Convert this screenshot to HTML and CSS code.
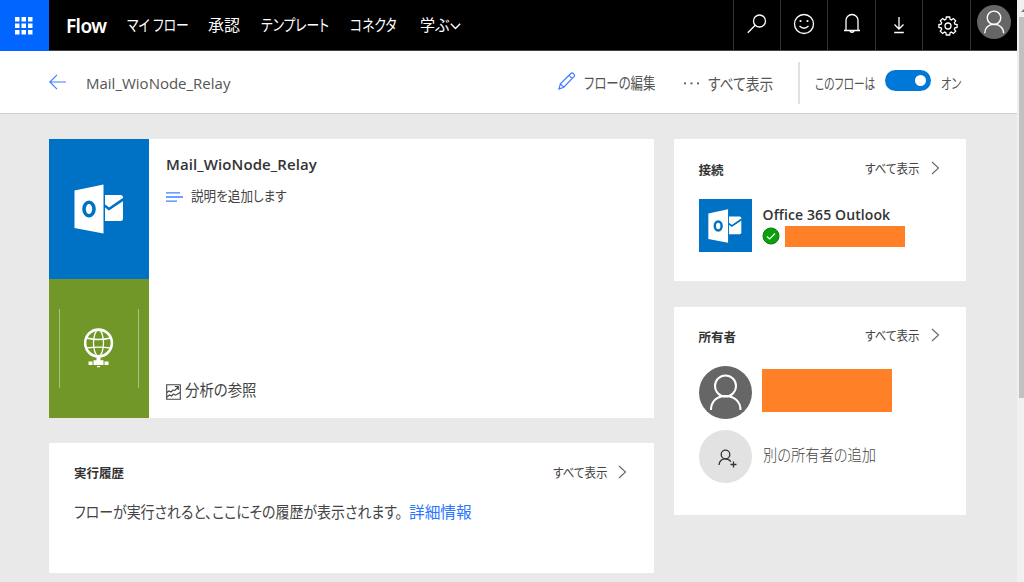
FILE: index.html
```html
<!DOCTYPE html>
<html lang="ja">
<head>
<meta charset="utf-8">
<title>Flow</title>
<link rel="stylesheet" href="styles.css">
</head>
<body>
<svg class="defs" width="0" height="0">
  <symbol id="outlook" viewBox="0 0 50 50">
    <path fill="#fff" d="M.5 6.500 29.500 .5v49L.5 44zM31 11H46.500q2.500 0 2.500 2.500V35q0 2-2.500 2H31z"/>
    <ellipse cx="15" cy="25" rx="5" ry="6.700" fill="none" stroke="#0072c6" stroke-width="3.600"/>
    <path d="M30.500 21.500 35 25 49.500 15.200" fill="none" stroke="#0072c6" stroke-width="2.600"/>
  </symbol>
  <symbol id="person" viewBox="0 0 53 53">
    <circle cx="26.500" cy="20" r="10.500"/>
    <path d="M12 44c0-8.500 6-14 14.500-14S41.500 35.500 41.500 44"/>
  </symbol>
  <symbol id="chevron" viewBox="0 0 9 14"><path d="M1 1l6.500 6L1 13" fill="none" stroke="#666" stroke-width="1.100"/></symbol>
</svg>
<div class="app">
  <div class="page">
    <header class="topbar">
      <div class="waffle">
        <svg width="18" height="18" viewBox="0 0 18 18" fill="#fff"><path d="M0 0h4.500v4.500H0zM6.500 0H11v4.500H6.500zM13 0h4.500v4.500H13zM0 6.500h4.500V11H0zM6.500 6.500H11V11H6.500zM13 6.500h4.500V11H13zM0 13h4.500v4.500H0zM6.500 13H11v4.500H6.500zM13 13h4.500v4.500H13z"/></svg>
      </div>
      <nav class="nav">
        <span class="brand">Flow</span>
        <span class="narrow">マイ フロー</span>
        <span>承認</span>
        <span class="narrow">テンプレート</span>
        <span class="narrow">コネクタ</span>
        <span class="learn"><span class="narrow">学ぶ</span><svg width="11" height="7" viewBox="0 0 11 7"><path d="M.8.8l4.700 4.700L10.200.8" fill="none" stroke="#fff" stroke-width="1.400"/></svg></span>
      </nav>
      <div class="tools">
        <div class="tool"><svg width="20" height="20" viewBox="0 0 20 20"><circle cx="12.500" cy="7" r="6"/><path d="M8.200 11.300.8 18.800"/></svg></div>
        <div class="tool"><svg width="22" height="22" viewBox="0 0 22 22"><circle cx="11" cy="11" r="9.500"/><path d="M6.500 13q4.500 4.500 9 0"/><circle class="dot" cx="7.500" cy="8" r="1.100"/><circle class="dot" cx="14.500" cy="8" r="1.100"/></svg></div>
        <div class="tool"><svg width="18" height="21" viewBox="0 0 18 21"><path d="M1 17.500h16M3 17.500V7.500a6 6 0 0 1 12 0v10M7 17.500a2 1.800 0 0 0 4 0"/></svg></div>
        <div class="tool download"><svg width="12" height="18" viewBox="0 0 12 18"><path d="M6 1v12M1.500 8.500 6 13l4.500-4.500M1.200 16.500h9.600"/></svg></div>
        <div class="tool gear"><svg width="20" height="20" viewBox="0 0 20 20"><path d="M8.300 1h3.400l.4 2.400 1.300.5 2-1.400 2.300 2.300-1.400 2 .5 1.300 2.300.4v3l-2.300.4-.5 1.300 1.400 2-2.300 2.300-2-1.400-1.300.5-.4 2.400H8.300l-.4-2.400-1.300-.5-2 1.400-2.300-2.300 1.400-2-.5-1.300L.9 11.500v-3l2.300-.4.5-1.300-1.400-2 2.300-2.300 2 1.400 1.300-.5z"/><circle cx="10" cy="10" r="3"/></svg></div>
        <div class="tool"><svg class="avatar" width="34" height="34"><use href="#person"/></svg></div>
      </div>
    </header>
    <div class="subbar">
      <svg class="back" width="17" height="16" viewBox="0 0 17 16"><path d="M17 8H1M8 .8.8 8 8 15.200" fill="none" stroke="#3f7cff" stroke-width="1.200"/></svg>
      <span class="flow-name">Mail_WioNode_Relay</span>
      <div class="action edit">
        <svg width="18" height="18" viewBox="0 0 18 18" fill="none" stroke="#3f7cff" stroke-width="1.200"><path d="M1 17 2.400 11.800 12.800 1.500q1.400-1.200 2.900.3t.3 2.900L5.800 15.200zM2.400 11.800l3.400 3.400M11 3.300l3.300 3.300"/></svg>
        <span>フローの編集</span>
      </div>
      <div class="action more">
        <svg width="16" height="3" viewBox="0 0 16 3" fill="#555"><path d="M0 .5h2v1.700H0zM6.500.5h2v1.700h-2zM13 .5h2v1.700h-2z"/></svg>
        <span>すべて表示</span>
      </div>
      <div class="state">
        <span class="state-label">このフローは</span>
        <span class="toggle"><i></i></span>
        <span class="on">オン</span>
      </div>
    </div>
    <main class="content">
      <div class="left">
        <section class="card summary">
          <div class="tiles">
            <div class="tile blue"><svg width="50" height="50"><use href="#outlook"/></svg></div>
            <div class="tile green">
              <svg width="30" height="40" viewBox="0 0 30 40" fill="none" stroke="#fff"><circle cx="14.500" cy="15" r="13.400" stroke-width="2.600"/><ellipse cx="14.500" cy="15" rx="5" ry="13" stroke-width="1.300"/><path d="M2.500 10q12 3 24 0M2.500 20q12-1.800 24 0" stroke-width="1.400"/><path d="M14.500 29v4" stroke-width="4"/><path d="M9.500 32.200h10v4.800h-10zM4.500 33.400h4v3.600h-4zM20.500 33.400h4v3.600h-4zM13 38h3v1.300h-3z" fill="#fff" stroke="none"/></svg>
            </div>
          </div>
          <div class="details">
            <h1>Mail_WioNode_Relay</h1>
            <div class="describe">
              <svg width="17" height="10" viewBox="0 0 17 10"><path d="M0 .8h14M0 5h17M0 9.200h11" stroke="#3f82ff" stroke-width="1.300"/></svg>
              <span>説明を追加します</span>
            </div>
            <div class="analytics">
              <svg width="15" height="16" viewBox="0 0 15 16" fill="none" stroke="#444" stroke-width="1.100"><path d="M.7.7h13.600v14.500H.7zM1 8.500l2-1.500 2 1 2-2 2 .3 3-3.500M8.800 2.500h3.500V6M1 13l2.500-2 2 1 2-2 2 1.200 4.500-2.700"/></svg>
              <span>分析の参照</span>
            </div>
          </div>
        </section>
        <section class="card history">
          <div class="head"><h2>実行履歴</h2><div class="all"><span>すべて表示</span><svg width="9" height="14"><use href="#chevron"/></svg></div></div>
          <p><span class="msg">フローが実行されると、ここにその履歴が表示されます。</span><a>詳細情報</a></p>
        </section>
      </div>
      <aside class="right">
        <section class="card connections">
          <div class="head"><h2>接続</h2><div class="all"><span>すべて表示</span><svg width="9" height="14"><use href="#chevron"/></svg></div></div>
          <div class="row">
            <div class="app-icon"><svg width="34" height="34"><use href="#outlook"/></svg></div>
            <div class="connection">
              <strong>Office 365 Outlook</strong>
              <div class="status"><svg width="18" height="18" viewBox="0 0 18 18"><circle cx="9" cy="9" r="8" fill="#0ba10b" stroke="#107510"/><path d="M5 9.500l2.700 2.500L13 6.500" fill="none" stroke="#fff" stroke-width="1.100"/></svg><span class="account"></span></div>
            </div>
          </div>
        </section>
        <section class="card owners">
          <div class="head"><h2>所有者</h2><div class="all"><span>すべて表示</span><svg width="9" height="14"><use href="#chevron"/></svg></div></div>
          <div class="row"><svg class="avatar" width="53" height="53"><use href="#person"/></svg><span class="owner-name"></span></div>
          <div class="row add">
            <div class="add-icon"><svg width="19" height="19" viewBox="0 0 19 19" fill="none" stroke="#333" stroke-width="1.300"><circle cx="7.500" cy="5.500" r="4.300"/><path d="M1 16c.3-4 3-6.200 6.500-6.200 2.300 0 4.200 1 5.400 2.800M15.500 12.500v6M12.500 15.500h6"/></svg></div>
            <span>別の所有者の追加</span>
          </div>
        </section>
      </aside>
    </main>
  </div>
  <div class="scrollbar"><svg width="7" height="17" viewBox="0 0 7 17"><path d="M4 12l4-4v4z" fill="#777"/></svg><div class="thumb"></div></div>
</div>
</body>
</html>
```

FILE: styles.css
```css
* { box-sizing: border-box; }
body {
  margin: 0;
  overflow: hidden;
  font-family: "Open Sans", "Noto Sans CJK JP", sans-serif;
  font-size: 16px;
  font-feature-settings: "palt";
  color: #444;
  line-height: 20px;
  white-space: nowrap;
}
svg { display: block; flex: none; }
h1, h2, p { margin: 0; }
.defs { position: absolute; }
.app { display: flex; width: 1024px; height: 582px; background: #e9e9e9; }
.page { width: 1017px; }
.topbar { display: flex; height: 51px; background: #000; border-bottom: 1px solid #444; color: #fff; }
.waffle { width: 49px; height: 51px; background: #06f; padding: 17px 0 0 15px; }
.nav { flex: 1; display: grid; grid-template-columns: 61px 81px 53px 89px 70px 60px; padding: 15px 0 0 17px; }
.brand { font-family: "Noto Sans", sans-serif; font-size: 19px; font-weight: 600; line-height: 22px; letter-spacing: -.6px; }
.narrow { transform: scaleX(.8); transform-origin: 0 0; }
.learn { display: flex; }
.learn .narrow { width: 29px; transform: scaleX(.94); }
.learn svg { margin: 8px 0 0 1px; }
.tools { display: grid; grid-template-columns: repeat(6, 47.4px); }
.tool { border-left: 1px solid #333; display: flex; justify-content: center; padding-top: 13px; height: 50px; }
.tool svg { fill: none; stroke: #fff; stroke-width: 1.3; }
.tool:first-child { padding-top: 14px; }
.tool .dot { fill: #fff; stroke: none; }
.tool.download, .tool.gear { padding-top: 16px; }
.tool.gear { padding-left: 3px; }
.avatar { border-radius: 50%; background: #666; fill: none; stroke: #fff; stroke-width: 2; }
.tool .avatar { margin-top: -8px; stroke-width: 2.2; }
.subbar { display: flex; height: 63px; background: #fff; border-bottom: 1px solid #cfd2cf; padding-left: 49px; color: #555; }
.back { margin-top: 22.5px; }
.flow-name { width: 472px; padding: 22px 0 0 20px; font-size: 15px; }
.action { display: flex; }
.action span, .describe span, .analytics span, .add > span { transform-origin: 0 0; }
.action span { height: 20px; }
.edit { width: 126px; margin-left: 20px; gap: 8px; padding-top: 22px; }
.edit svg { margin-top: -1px; }
.edit span { transform: scaleX(.775); }
.more { width: 114px; gap: 9px; padding-top: 23px; }
.more svg { margin-top: 8px; }
.more span { transform: translateX(-1px) scaleX(.86); }
.state { height: 42px; margin-top: 11px; border-left: 2px solid #e0e0e0; display: flex; font-size: 14.5px; }
.state-label { width: 85px; padding-top: 12px; transform: translateX(15px) scaleX(.74); transform-origin: 0 0; }
.toggle { width: 46px; height: 21px; background: #0078d7; border-radius: 11px; display: flex; justify-content: flex-end; padding: 5px; margin-top: 8px; }
.toggle i { width: 11px; height: 11px; border-radius: 50%; background: #fff; }
.on { margin: 12px 0 0 10px; height: 20px; transform: scaleX(.77); transform-origin: 0 0; }
.content { display: flex; gap: 19.2px; padding: 25px 0 0 49px; }
.left { width: 605.4px; display: flex; flex-direction: column; gap: 25.4px; }
.right { width: 292.8px; display: flex; flex-direction: column; gap: 25.6px; }
.card { background: #fff; }
.summary { height: 279px; display: flex; }
.tiles { width: 100.4px; }
.tile { display: flex; justify-content: center; align-items: center; height: 139.5px; }
.blue { background: #0072c6; }
.green { background: #709727; }
.green::before, .green::after { content: ""; width: 1px; height: 79px; background: #a9c17e; }
.green svg { margin: 0 24px; }
.details { display: flex; flex-direction: column; padding: 15px 0 18px 16.6px; }
h1 { font-size: 15px; font-weight: 600; line-height: 20px; color: #333; letter-spacing: .1px; }
.describe { display: flex; gap: 8px; font-size: 14px; margin-top: 12px; }
.describe svg { margin-top: 6px; }
.describe span { transform: scaleX(.9); }
.analytics { display: flex; gap: 4px; margin-top: auto; }
.analytics svg { margin-top: 4px; }
.analytics span { transform: scaleX(.9); }
.history { height: 129.5px; padding: 20px 27px 0 25px; }
.head { display: flex; justify-content: space-between; }
h2 { font-size: 12.5px; font-weight: 600; line-height: 21px; color: #333; }
.all { display: flex; align-items: center; font-size: 13px; gap: 11px; height: 17px; }
.all span { transform: scaleX(.885); transform-origin: 100% 0; }
.history p { display: flex; margin-top: 17.5px; }
.msg { width: 334.5px; transform: scaleX(.872); transform-origin: 0 0; }
.history a { color: #2a76ff; transform: scaleX(.98); transform-origin: 0 0; }
.connections { height: 142px; padding: 20.5px 26.5px 0 25px; }
.row { display: flex; gap: 11px; }
.app-icon { width: 53px; height: 53px; background: #0072c6; display: flex; align-items: center; justify-content: center; }
.connections .row { margin-top: 18.5px; }
.connection { padding-top: 6px; }
strong { display: block; font-size: 14px; font-weight: 600; color: #333; letter-spacing: .1px; }
.status { display: flex; gap: 5px; margin: 1px 0 0 -1px; }
.status svg { margin-top: 1px; }
.account { width: 120px; height: 21px; background: #ff8027; }
.owners { height: 208.6px; padding: 20.4px 26.5px 0 25px; }
.owners .row { margin-top: 18px; }
.owners .row.add { margin-top: 11px; font-weight: 300; }
.owner-name { width: 130px; height: 43px; margin: 3px 0 0 -1px; background: #ff8027; }
.add-icon { width: 53px; height: 53px; border-radius: 50%; background: #e2e2e2; display: flex; padding: 19px 0 0 19px; }
.add > span { padding-top: 15px; transform: scaleX(.89); }
.scrollbar { width: 7px; background: #f0f0f0; }
.thumb { height: 381px; background: #c1c1c1; margin-left: 1.5px; }
```
